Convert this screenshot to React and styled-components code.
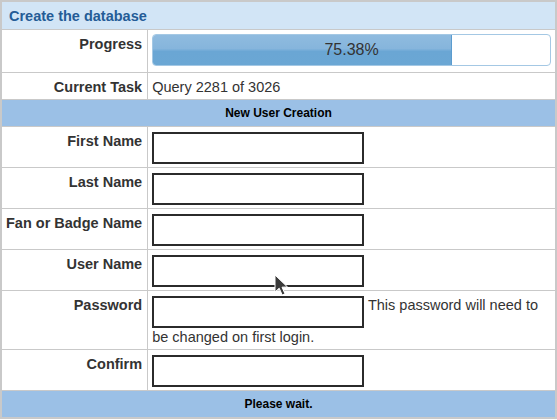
import styled, { createGlobalStyle } from 'styled-components';

const GlobalStyle = createGlobalStyle`
  body {
    margin: 0;
    background: #fff;
    font-family: 'Liberation Sans', Arial, sans-serif;
  }
`;

const fields = [
  { label: 'First Name' },
  { label: 'Last Name' },
  { label: 'Fan or Badge Name' },
  { label: 'User Name' },
  { label: 'Password', note: 'This password will need to be changed on first login.', type: 'password' },
  { label: 'Confirm', type: 'password' },
];

export default function App() {
  const percent = (2281 / 3026) * 100;

  return (
    <Page>
      <GlobalStyle />
      <Table>
        <tbody>
          <tr>
            <Title colSpan={2}>Create the database</Title>
          </tr>
          <tr>
            <Label>Progress</Label>
            <Value $top={4} $bottom={6}>
              <Bar>
                <Fill style={{ width: `${percent}%` }} />
                <BarText>{percent.toFixed(2)}%</BarText>
              </Bar>
            </Value>
          </tr>
          <tr>
            <Label>Current Task</Label>
            <Value>Query 2281 of 3026</Value>
          </tr>
          <tr>
            <Section colSpan={2}>New User Creation</Section>
          </tr>
          {fields.map((f) => (
            <tr key={f.label}>
              <Label>{f.label}</Label>
              <Value>
                <Input type={f.type || 'text'} />
                {f.note && <> {f.note}</>}
              </Value>
            </tr>
          ))}
          <tr>
            <Section colSpan={2}>Please wait.</Section>
          </tr>
        </tbody>
      </Table>
      <Cursor width="15" height="22" viewBox="0 0 15 22">
        <path
          d="M1 1 L1 18 L5.2 14.2 L8.2 21 L11 19.8 L8 13.2 L13.5 13 Z"
          fill="#3a3a3a"
          stroke="#fff"
          strokeWidth="1"
        />
      </Cursor>
    </Page>
  );
}

const Page = styled.div`
  position: relative;
  width: 557px;
`;

const Table = styled.table`
  width: 557px;
  border-collapse: collapse;
  border: 2px solid #c9c9c9;
  font-size: 14.5px;
  line-height: 18px;
  color: #333;
`;

const Title = styled.td`
  background: #d2e5f6;
  color: #245c96;
  font-weight: bold;
  font-size: 14.5px;
  padding: 5px 6px 4px 7px;
  border: 1px solid #c9c9c9;
`;

const Section = styled.td`
  background: #9bc0e6;
  color: #000;
  font-weight: bold;
  font-size: 12px;
  text-align: center;
  padding: 4px 4px 4px;
  border: 1px solid #c9c9c9;
`;

const Label = styled.td`
  width: 136px;
  text-align: right;
  vertical-align: top;
  font-weight: bold;
  padding: 5px 5px 3px 4px;
  border: 1px solid #c9c9c9;
  white-space: nowrap;
`;

const Value = styled.td`
  vertical-align: top;
  padding: ${(p) => p.$top ?? 5}px 4px ${(p) => p.$bottom ?? 3}px 4px;
  border: 1px solid #c9c9c9;
`;

const Bar = styled.div`
  position: relative;
  height: 32px;
  box-sizing: border-box;
  border: 1px solid #a4c8e4;
  border-radius: 4px;
  overflow: hidden;
  background: #fff;
`;

const Fill = styled.div`
  height: 100%;
  background: linear-gradient(to bottom, #8fbbdf 0%, #86b5dc 45%, #6aa6d4 55%, #6ba7d4 100%);
  border-right: 1px solid #5b9ccf;
  box-sizing: border-box;
`;

const BarText = styled.span`
  position: absolute;
  inset: 0;
  display: flex;
  align-items: center;
  justify-content: center;
  font-size: 16px;
  color: #333;
`;

const Input = styled.input`
  width: 212px;
  height: 32px;
  box-sizing: border-box;
  border: 2px solid #2b2b2b;
  margin: 0;
  padding: 2px 4px;
  vertical-align: top;
  font: inherit;
`;

const Cursor = styled.svg`
  position: absolute;
  left: 274px;
  top: 274px;
`;
